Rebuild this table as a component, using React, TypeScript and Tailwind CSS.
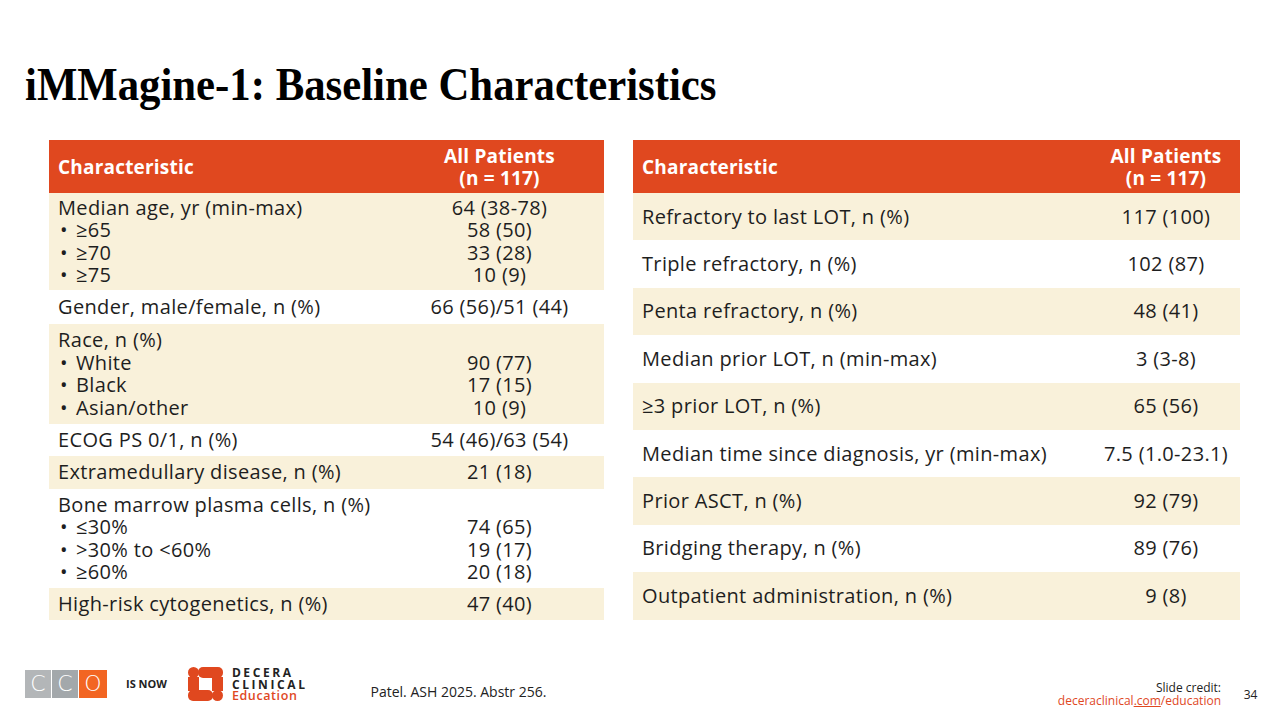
import React from 'react';

const sans = "font-['Open_Sans',sans-serif]";

type LeftRow = {
  label: string;
  items?: { label: string; value: string }[];
  value?: string;
  h: string;
  cream: boolean;
};

const leftRows: LeftRow[] = [
  {
    label: 'Median age, yr (min-max)',
    value: '64 (38-78)',
    items: [
      { label: '≥65', value: '58 (50)' },
      { label: '≥70', value: '33 (28)' },
      { label: '≥75', value: '10 (9)' },
    ],
    h: 'h-[97px]',
    cream: true,
  },
  { label: 'Gender, male/female, n (%)', value: '66 (56)/51 (44)', h: 'h-[34px]', cream: false },
  {
    label: 'Race, n (%)',
    items: [
      { label: 'White', value: '90 (77)' },
      { label: 'Black', value: '17 (15)' },
      { label: 'Asian/other', value: '10 (9)' },
    ],
    h: 'h-[100px]',
    cream: true,
  },
  { label: 'ECOG PS 0/1, n (%)', value: '54 (46)/63 (54)', h: 'h-[32px]', cream: false },
  { label: 'Extramedullary disease, n (%)', value: '21 (18)', h: 'h-[33px]', cream: true },
  {
    label: 'Bone marrow plasma cells, n (%)',
    items: [
      { label: '≤30%', value: '74 (65)' },
      { label: '>30% to <60%', value: '19 (17)' },
      { label: '≥60%', value: '20 (18)' },
    ],
    h: 'h-[99px]',
    cream: false,
  },
  { label: 'High-risk cytogenetics, n (%)', value: '47 (40)', h: 'h-[32px]', cream: true },
];

const rightRows = [
  ['Refractory to last LOT, n (%)', '117 (100)'],
  ['Triple refractory, n (%)', '102 (87)'],
  ['Penta refractory, n (%)', '48 (41)'],
  ['Median prior LOT, n (min-max)', '3 (3-8)'],
  ['≥3 prior LOT, n (%)', '65 (56)'],
  ['Median time since diagnosis, yr (min-max)', '7.5 (1.0-23.1)'],
  ['Prior ASCT, n (%)', '92 (79)'],
  ['Bridging therapy, n (%)', '89 (76)'],
  ['Outpatient administration, n (%)', '9 (8)'],
];

function Header({ cols }: { cols: string }) {
  return (
    <div className={`grid ${cols} h-[53px] bg-[#e0481f] text-white font-bold text-[19px] leading-[22px] tracking-[0.2px]`}>
      <div className="flex items-center pl-[9px]">Characteristic</div>
      <div className="flex flex-col items-center justify-center">
        <span>All Patients</span>
        <span>(n = 117)</span>
      </div>
    </div>
  );
}

function LeftTable() {
  return (
    <div className={`w-[555px] ${sans} text-[#1e1e1e]`}>
      <Header cols="grid-cols-[346px_209px]" />
      {leftRows.map((r) => (
        <div
          key={r.label}
          className={`grid grid-cols-[346px_209px] ${r.h} ${r.cream ? 'bg-[#f9f1da]' : 'bg-white'} text-[20px] leading-[22.5px] tracking-[0.35px]`}
        >
          <div className="flex flex-col justify-center pl-[9px]">
            <div>{r.label}</div>
            {r.items?.map((it) => (
              <div key={it.label} className="flex">
                <span className="w-[18px] pl-[2px]">•</span>
                <span>{it.label}</span>
              </div>
            ))}
          </div>
          <div className="flex flex-col justify-center items-center">
            {r.value ? <div>{r.value}</div> : <div>&nbsp;</div>}
            {r.items?.map((it) => (
              <div key={it.label}>{it.value}</div>
            ))}
          </div>
        </div>
      ))}
    </div>
  );
}

function RightTable() {
  return (
    <div className={`w-[607px] ${sans} text-[#1e1e1e]`}>
      <Header cols="grid-cols-[459px_148px]" />
      {rightRows.map(([label, value], i) => (
        <div
          key={label}
          className={`grid grid-cols-[459px_148px] h-[47.4px] ${i % 2 === 0 ? 'bg-[#f9f1da]' : 'bg-white'} text-[20px] tracking-[0.35px]`}
        >
          <div className="flex items-center pl-[9px]">{label}</div>
          <div className="flex items-center justify-center">{value}</div>
        </div>
      ))}
    </div>
  );
}

function CcoLogo() {
  return (
    <div className="flex h-[28px] font-['DejaVu_Sans',sans-serif] font-light text-white text-[22px] leading-[28px]">
      <div className="w-[27px] bg-[#b3b6b8] flex items-center justify-center border-r border-white">C</div>
      <div className="w-[27px] bg-[#a3a8ab] flex items-center justify-center border-r border-white">C</div>
      <div className="w-[28px] bg-[#f26522] flex items-center justify-center">O</div>
    </div>
  );
}

function DeceraMark() {
  return (
    <svg width="35" height="34" viewBox="0 0 35 34" aria-hidden="true">
      <g fill="#e0481f">
        <circle cx="5.5" cy="5.5" r="5.5" />
        <rect x="10" y="0" width="25" height="11" rx="5" />
        <rect x="0" y="10" width="11" height="14" />
        <rect x="24" y="10" width="11" height="14" />
        <rect x="0" y="23" width="25" height="11" rx="5" />
        <circle cx="29.5" cy="28.5" r="5.5" />
      </g>
    </svg>
  );
}

export default function App() {
  return (
    <div className="w-[1280px] h-[720px] bg-white flex flex-col relative overflow-hidden">
      <h1 className="font-['Liberation_Serif',serif] font-bold text-[46px] leading-none text-black pl-[25px] pt-[62px] h-[140px]">
        <span className="inline-block origin-left scale-x-[0.93] whitespace-nowrap">iMMagine-1: Baseline Characteristics</span>
      </h1>
      <div className="flex gap-[29px] pl-[49px]">
        <LeftTable />
        <RightTable />
      </div>
      <div className="mt-auto h-[60px] flex items-start pl-[25px] pt-[4px]">
        <div className="flex items-center pt-[3px]">
          <CcoLogo />
          <span className={`ml-[19px] ${sans} font-bold text-[11px] text-[#222]`}>IS NOW</span>
          <div className="ml-[21px] flex items-center gap-[9px]">
            <DeceraMark />
            <div className={`${sans} text-[12px] leading-[11.5px] font-bold tracking-[2.6px]`}>
              <div className="text-[#222]">DECERA</div>
              <div className="text-[#222]">CLINICAL</div>
              <div className="text-[#e0481f] font-semibold text-[12.5px] tracking-[0.6px]">Education</div>
            </div>
          </div>
        </div>
        <div className={`ml-[63px] mt-[17px] ${sans} text-[14px] text-[#222]`}>Patel. ASH 2025. Abstr 256.</div>
        <div className={`ml-auto mt-[17px] text-right ${sans} text-[12px] leading-[13px]`}>
          <div className="text-[#222]">Slide credit:</div>
          <div className="text-[#e0481f]">
            deceraclinical<span className="underline">.com</span>/education
          </div>
        </div>
        <div className={`w-[59px] mt-[22px] text-center ${sans} text-[12px] text-[#222]`}>34</div>
      </div>
    </div>
  );
}
